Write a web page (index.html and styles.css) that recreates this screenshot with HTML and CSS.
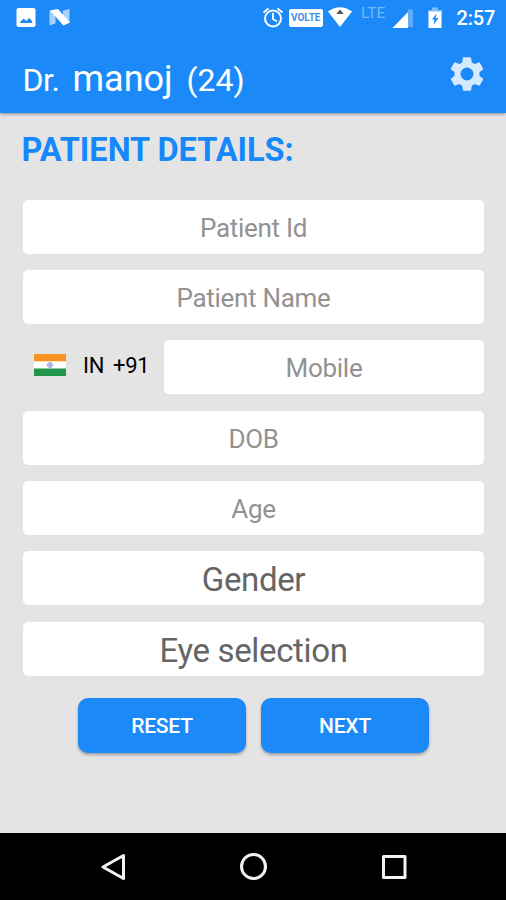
FILE: index.html
```html
<!DOCTYPE html>
<html lang="en">
<head>
<meta charset="utf-8">
<title>Patient Details</title>
<link rel="stylesheet" href="styles.css">
</head>
<body>
<div class="screen">
  <header class="header">
    <div class="status">
      <svg class="status-icons" width="80" height="36" viewBox="0 0 80 36">
        <path fill="#fff" fill-rule="evenodd" d="M18.500 8h15a2 2 0 0 1 2 2v15a2 2 0 0 1-2 2h-15a2 2 0 0 1-2-2V10a2 2 0 0 1 2-2zM19.500 23h12.800v-1.500l-3-3.800-2.800 3.300-3-2.500z"/>
        <path fill="#a8d2fc" d="M49.500 11l6-1v13.500l-6 2zM63 10.500l6.500-1.500v13.500l-6.500 2z"/>
        <path fill="#fff" d="M50 10.500l8-1.500L70 22.500 63.500 25.500z"/>
      </svg>
      <span class="volte">VOLTE</span>
      <svg class="status-icons" width="253" height="36" viewBox="253 0 253 36">
        <g fill="none" stroke="#fff" stroke-width="2">
          <circle cx="273" cy="18.500" r="8"/>
          <path d="M263.500 12.500l5-4M282.500 12.500l-5-4"/>
          <path stroke-width="1.800" d="M273 13v6l4 2.500"/>
        </g>
        <path fill="#fff" d="M328 11.500q12-8.500 24 0L340 27z"/>
        <path fill="#5c5550" d="M340 9.500l3.700 4.500h-7.400z"/>
        <path fill="#62abfa" d="M408 9.500h5V27h-5z"/>
        <path fill="#fff" d="M392.500 28L408 12v16z"/>
        <path fill="#82bdfb" d="M432 7.500h6V10h4v4h-13.500v-4h3.500z"/>
        <path fill="#fff" fill-rule="evenodd" d="M428.500 11.500h13V28h-13zM437 13l-5 6.500h2.500l-1 5.500 5-7h-3z"/>
      </svg>
      <span class="lte">LTE</span>
      <span class="clock">2:57</span>
    </div>
    <div class="appbar">
      <h1 class="title"><span class="prefix">Dr.</span><span class="name">manoj</span><span class="count">(24)</span></h1>
      <svg class="gear" width="40" height="40" viewBox="0 0 24 24"><path fill="#d6eaff" d="M19.430 12.980c.04-.32.07-.64.07-.98s-.03-.66-.07-.98l2.110-1.650c.19-.15.24-.42.12-.64l-2-3.460c-.12-.22-.39-.3-.61-.22l-2.490 1c-.52-.4-1.080-.73-1.690-.98l-.38-2.650C14.460 2.180 14.250 2 14 2h-4c-.25 0-.46.18-.49.42l-.38 2.650c-.61.25-1.170.59-1.690.98l-2.490-1c-.23-.09-.49 0-.61.22l-2 3.460c-.13.22-.07.49.12.64l2.110 1.650c-.04.32-.07.65-.07.98s.03.66.07.98l-2.110 1.650c-.19.15-.24.42-.12.64l2 3.460c.12.22.39.3.61.22l2.490-1c.52.4 1.080.73 1.690.98l.38 2.650c.03.24.24.42.49.42h4c.25 0 .46-.18.49-.42l.38-2.650c.61-.25 1.170-.59 1.690-.98l2.490 1c.23.09.49 0 .61-.22l2-3.460c.12-.22.07-.49-.12-.64l-2.110-1.650zM12 15.900a3.900 3.900 0 1 1 0-7.800 3.900 3.900 0 0 1 0 7.800z"/></svg>
    </div>
  </header>
  <main class="content">
    <h2 class="heading">PATIENT DETAILS:</h2>
    <div class="form">
      <div class="field">Patient Id</div>
      <div class="field">Patient Name</div>
      <div class="phone">
        <svg class="flag" width="32" height="22" viewBox="0 0 32 22">
          <path fill="#fff" d="M0 0h32v22H0z"/>
          <path fill="#fb9321" d="M0 0h32v7.300H0z"/>
          <path fill="#21954a" d="M0 14.500h32V22H0z"/>
          <circle cx="16" cy="11" r="2.500" fill="#c3d0ef" stroke="#8fa8da"/>
          <circle cx="16" cy="11" r=".8" fill="#5878bd"/>
        </svg>
        <span class="country">IN</span><span class="code">+91</span>
        <div class="field mobile">Mobile</div>
      </div>
      <div class="field">DOB</div>
      <div class="field">Age</div>
      <div class="field select">Gender</div>
      <div class="field select">Eye selection</div>
    </div>
    <div class="actions">
      <button class="button" type="button">RESET</button>
      <button class="button" type="button">NEXT</button>
    </div>
  </main>
  <nav class="navbar">
    <svg width="28" height="30" viewBox="0 0 28 30"><path class="nav-line" d="M22.500 3.500v23L2 15z"/></svg>
    <svg width="30" height="30" viewBox="0 0 30 30"><circle class="nav-line" cx="13.500" cy="14.500" r="12"/></svg>
    <svg width="28" height="30" viewBox="0 0 28 30"><rect class="nav-line" x="3.500" y="4.500" width="21.500" height="21"/></svg>
  </nav>
</div>
</body>
</html>
```

FILE: styles.css
```css
* { box-sizing: border-box; }

body {
  margin: 0;
  font-family: Roboto, "Liberation Sans", sans-serif;
}

.screen {
  width: 506px;
  height: 900px;
  display: flex;
  flex-direction: column;
  background: #e4e4e4;
  overflow: hidden;
}

.header {
  height: 113px;
  flex: none;
  background: #1b8af8;
  color: #fff;
  box-shadow: 0 1px 3px rgba(0, 0, 0, .4);
}

.status {
  position: relative;
  height: 36px;
  display: flex;
  justify-content: space-between;
}

.status-icons { flex: none; }

.volte,
.lte,
.clock {
  position: absolute;
  white-space: nowrap;
}

.volte {
  left: 289px;
  top: 9px;
  width: 33.500px;
  height: 18px;
  border-radius: 2px;
  background: #fff;
  color: #3f8de8;
  font-size: 10px;
  font-weight: 700;
  line-height: 18px;
  text-align: center;
}

.lte {
  left: 361px;
  top: 5px;
  color: #73b5fb;
  font-size: 15.500px;
  line-height: 17px;
}

.clock {
  left: 456.500px;
  top: 7px;
  font-size: 20px;
  font-weight: 500;
  line-height: 23px;
  letter-spacing: -.2px;
}

.appbar {
  height: 77px;
  display: flex;
  align-items: flex-start;
  justify-content: space-between;
  padding: 18px 19px 0 22px;
}

.title {
  margin: 4px 0 0;
  display: flex;
  align-items: baseline;
  font-weight: 400;
  line-height: 42px;
}

.prefix { width: 50.500px; padding-left: .5px; font-size: 32px; letter-spacing: -.4px; }
.name { width: 114px; font-size: 36px; }
.count { font-size: 32px; }

.content { flex: 1; padding: 19px 22px 0 23px; }

.heading {
  margin: 0 0 30.600px -1.500px;
  color: #1588fb;
  font-size: 32.500px;
  font-weight: 700;
  line-height: 37px;
  white-space: nowrap;
}

.form {
  display: flex;
  flex-direction: column;
  gap: 16.330px;
}

.field {
  height: 54px;
  border-radius: 5px;
  background: #fff;
  color: #929292;
  font-size: 26px;
  letter-spacing: -.3px;
  line-height: 56px;
  text-align: center;
}

.select { color: #656565; font-size: 33px; letter-spacing: -.35px; line-height: 57px; }

.phone { display: flex; align-items: center; font-size: 22px; letter-spacing: -.3px; }
.flag { margin: -5px 17.500px 0 10.500px; }
.country { width: 30px; margin-top: -4px; }
.code { width: 51px; margin-top: -4px; }
.mobile { flex: 1; }

.actions {
  display: flex;
  justify-content: center;
  gap: 15px;
  margin-top: 22.400px;
}

.button {
  width: 168px;
  height: 55px;
  padding: 0;
  border: 0;
  border-radius: 10px;
  background: #1b8af8;
  color: #fff;
  font: 500 21px/57px Roboto, "Liberation Sans", sans-serif;
  letter-spacing: -.2px;
  box-shadow: 0 2px 3px rgba(0, 0, 0, .3);
}

.navbar {
  height: 67px;
  flex: none;
  display: flex;
  align-items: center;
  justify-content: space-between;
  padding: 0 98px 0 101px;
  background: #000;
}

.nav-line { fill: none; stroke: #f2f2f2; stroke-width: 3; stroke-linejoin: round; }
```
